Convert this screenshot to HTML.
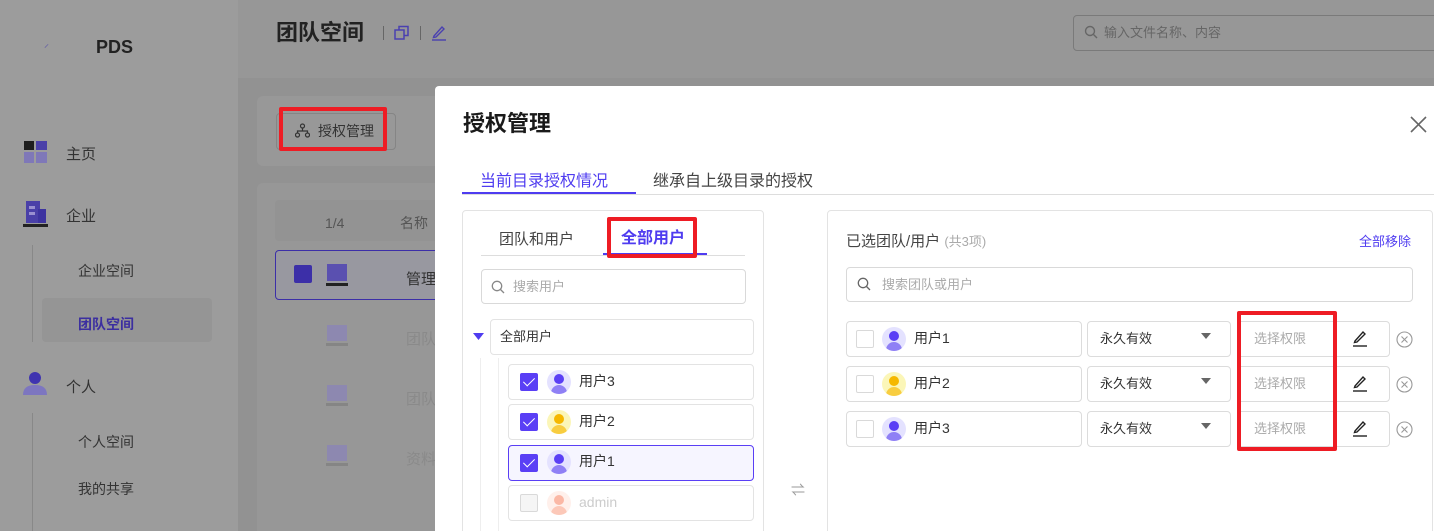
<!DOCTYPE html>
<html><head><meta charset="utf-8"><style>
*{box-sizing:border-box;margin:0;padding:0}
html,body{width:1434px;height:531px;overflow:hidden}
body{position:relative;background:#929292;font-family:"Liberation Sans","Noto Sans CJK SC",sans-serif;color:#333}
.a{position:absolute}
.t{position:absolute;white-space:nowrap;line-height:1}
.box{position:absolute;border:1px solid #e3e3e3;border-radius:4px;background:#fff}
.cb{position:absolute;width:18px;height:18px;border:1px solid #d9d9d9;border-radius:2px;background:#fff}
.cb.on{background:#5a3ff5;border-color:#5a3ff5}
.cb.on:after{content:"";position:absolute;left:5px;top:1px;width:5px;height:10px;border:solid #fff;border-width:0 1.5px 1.5px 0;transform:rotate(45deg)}
.av{position:absolute;width:24px;height:24px;border-radius:50%;overflow:hidden}
.av i{position:absolute;left:7px;top:4px;width:10px;height:10px;border-radius:50%}
.av b{position:absolute;left:4px;top:15px;width:16px;height:10px;border-radius:8px 8px 0 0}
.red{position:absolute;border:4px solid #ee1c24;border-radius:2px}
</style></head><body>
<div class="a" style="left:0;top:0;width:238px;height:531px;background:#9c9c9c"></div>
<div class="a" style="left:238px;top:0;width:1196px;height:78px;background:#979797"></div>
<div class="t" style="left:44px;top:40px;font-size:10px;color:#4b44a8">⸝</div>
<div class="t" style="left:96px;top:38px;font-size:18px;font-weight:bold;color:#222">PDS</div>
<svg class="a" style="left:24px;top:141px" width="23" height="22"><rect x="0" y="0" width="10" height="9" fill="#1e1e1e"/><rect x="12" y="0" width="11" height="9" fill="#4a40a8"/><rect x="0" y="11" width="10" height="11" fill="#7f78b8"/><rect x="12" y="11" width="11" height="11" fill="#7f78b8"/></svg>
<div class="t" style="left:66px;top:147px;font-size:15px;color:#333">主页</div>
<svg class="a" style="left:23px;top:201px" width="26" height="26"><rect x="3" y="0" width="14" height="22" fill="#4a40a8"/><rect x="15" y="8" width="8" height="14" fill="#3d33a0"/><rect x="6" y="5" width="6" height="3" fill="#9990d0"/><rect x="6" y="11" width="6" height="3" fill="#9990d0"/><rect x="0" y="23" width="25" height="3" fill="#222"/></svg>
<div class="t" style="left:66px;top:209px;font-size:15px;color:#333">企业</div>
<div class="a" style="left:32px;top:245px;width:1px;height:97px;background:#888"></div>
<div class="t" style="left:78px;top:264px;font-size:14px;color:#333">企业空间</div>
<div class="a" style="left:42px;top:298px;width:170px;height:44px;background:#959595;border-radius:4px"></div>
<div class="t" style="left:78px;top:317px;font-size:14px;color:#3c2fa0;font-weight:bold">团队空间</div>
<svg class="a" style="left:23px;top:371px" width="25" height="24"><circle cx="12" cy="7" r="6" fill="#3f34b0"/><path d="M0 24 Q0 14 12 14 Q24 14 24 24Z" fill="#7d76c0"/></svg>
<div class="t" style="left:66px;top:380px;font-size:15px;color:#333">个人</div>
<div class="a" style="left:32px;top:413px;width:1px;height:118px;background:#888"></div>
<div class="t" style="left:78px;top:435px;font-size:14px;color:#333">个人空间</div>
<div class="t" style="left:78px;top:482px;font-size:14px;color:#333">我的共享</div>

<div class="t" style="left:276px;top:22px;font-size:22px;font-weight:bold;color:#222">团队空间</div>
<div class="a" style="left:383px;top:26px;width:1px;height:14px;background:#666"></div>
<svg class="a" style="left:394px;top:25px" width="16" height="16" fill="none" stroke="#4a40b0" stroke-width="1.5"><rect x="1" y="5" width="9" height="9"/><path d="M5 5V1.5h9v9h-4"/></svg>
<div class="a" style="left:420px;top:26px;width:1px;height:14px;background:#666"></div>
<svg class="a" style="left:431px;top:24px" width="16" height="17" fill="none" stroke="#4a40b0" stroke-width="1.4"><path d="M3 12 L11 3 L13 5 L5 13 L2.5 13.5Z"/><path d="M1 16H15"/></svg>
<div class="a" style="left:1073px;top:15px;width:365px;height:36px;border:1px solid #7a7a7a;border-radius:4px"></div>
<svg class="a" style="left:1084px;top:25px" width="14" height="14" fill="none" stroke="#666" stroke-width="1.4"><circle cx="6" cy="6" r="4.5"/><path d="M9.5 9.5L13 13"/></svg>
<div class="t" style="left:1104px;top:26px;font-size:13px;color:#666">输入文件名称、内容</div>

<div class="a" style="left:257px;top:96px;width:200px;height:70px;background:#989898;border-radius:6px"></div>
<div class="a" style="left:276px;top:113px;width:120px;height:37px;border:1px solid #858585;border-radius:4px"></div>
<svg class="a" style="left:295px;top:123px" width="15" height="15" fill="none" stroke="#333" stroke-width="1.2"><circle cx="7.5" cy="3" r="2"/><circle cx="2.5" cy="12" r="2"/><circle cx="12.5" cy="12" r="2"/><path d="M7.5 5v3M2.5 10V8h10v2"/></svg>
<div class="t" style="left:318px;top:124px;font-size:14px;color:#333">授权管理</div>
<div class="red" style="left:279px;top:107px;width:108px;height:44px"></div>

<div class="a" style="left:257px;top:183px;width:200px;height:348px;background:#979797;border-radius:6px 6px 0 0"></div>
<div class="a" style="left:275px;top:200px;width:170px;height:41px;background:#939393;border-radius:4px"></div>
<div class="t" style="left:325px;top:216px;font-size:14px;color:#555">1/4</div>
<div class="t" style="left:400px;top:216px;font-size:14px;color:#555">名称</div>
<div class="a" style="left:275px;top:250px;width:170px;height:50px;border:1.5px solid #3c2fa8;border-radius:4px;background:#9898a0"></div>
<div class="a" style="left:294px;top:265px;width:18px;height:18px;background:#3c2fa8;border-radius:2px"></div>
<div class="t" style="left:406px;top:272px;font-size:15px;color:#333">管理</div>
<svg class="a" style="left:326px;top:264px" width="22" height="24"><rect x="1" y="0" width="20" height="17" fill="#5a50b0"/><rect x="0" y="19" width="22" height="3" fill="#222"/></svg>
<div class="t" style="left:406px;top:332px;font-size:15px;color:#8a8a8a">团队</div>
<div class="t" style="left:406px;top:392px;font-size:15px;color:#8a8a8a">团队</div>
<div class="t" style="left:406px;top:452px;font-size:15px;color:#8a8a8a">资料</div>
<svg class="a" style="left:326px;top:325px" width="22" height="24"><rect x="1" y="0" width="20" height="16" fill="#8d88b0"/><rect x="0" y="18" width="22" height="3" fill="#858585"/></svg>
<svg class="a" style="left:326px;top:385px" width="22" height="24"><rect x="1" y="0" width="20" height="16" fill="#8d88b0"/><rect x="0" y="18" width="22" height="3" fill="#858585"/></svg>
<svg class="a" style="left:326px;top:445px" width="22" height="24"><rect x="1" y="0" width="20" height="16" fill="#8d88b0"/><rect x="0" y="18" width="22" height="3" fill="#858585"/></svg>

<div class="a" style="left:435px;top:86px;width:999px;height:445px;background:#fff;border-radius:4px 0 0 0"></div>
<div class="t" style="left:463px;top:113px;font-size:22px;font-weight:bold;color:#1a1a1a">授权管理</div>
<svg class="a" style="left:1410px;top:116px" width="17" height="17" stroke="#666" stroke-width="1.6"><path d="M1 1L16 16M16 1L1 16"/></svg>
<div class="t" style="left:480px;top:174px;font-size:16px;color:#4f3cf0">当前目录授权情况</div>
<div class="t" style="left:653px;top:174px;font-size:16px;color:#444">继承自上级目录的授权</div>
<div class="a" style="left:462px;top:194px;width:972px;height:1px;background:#ddd"></div>
<div class="a" style="left:462px;top:192px;width:174px;height:2px;background:#4f3cf0"></div>

<div class="box" style="left:462px;top:210px;width:302px;height:330px"></div>
<div class="t" style="left:499px;top:232px;font-size:15px;color:#444">团队和用户</div>
<div class="t" style="left:621px;top:231px;font-size:16px;color:#4f3cf0;font-weight:bold">全部用户</div>
<div class="a" style="left:481px;top:255px;width:264px;height:1px;background:#ddd"></div>
<div class="a" style="left:603px;top:253px;width:104px;height:2px;background:#4f3cf0"></div>
<div class="red" style="left:607px;top:217px;width:90px;height:41px"></div>
<div class="box" style="left:481px;top:269px;width:265px;height:35px;border-color:#d9d9d9"></div>
<svg class="a" style="left:491px;top:280px" width="14" height="14" fill="none" stroke="#888" stroke-width="1.3"><circle cx="6" cy="6" r="4.7"/><path d="M9.5 9.5L13 13"/></svg>
<div class="t" style="left:513px;top:280px;font-size:13px;color:#aaa">搜索用户</div>
<svg class="a" style="left:473px;top:333px" width="11" height="7"><path d="M0 0H11L5.5 7Z" fill="#4f3cf0"/></svg>
<div class="box" style="left:490px;top:319px;width:264px;height:36px"></div>
<div class="t" style="left:500px;top:330px;font-size:13px;color:#333">全部用户</div>
<div class="a" style="left:480px;top:358px;width:1px;height:173px;background:#eee"></div>
<div class="a" style="left:498px;top:358px;width:1px;height:173px;background:#eee"></div>

<div class="box" style="left:508px;top:364px;width:246px;height:36px"></div>
<div class="cb on" style="left:520px;top:373px"></div>
<div class="av" style="left:547px;top:370px;background:#e4e2ff"><i style="background:#5a3ff5"></i><b style="background:#8f80f5"></b></div>
<div class="t" style="left:579px;top:374px;font-size:14px;color:#333">用户3</div>
<div class="box" style="left:508px;top:404px;width:246px;height:36px"></div>
<div class="cb on" style="left:520px;top:413px"></div>
<div class="av" style="left:547px;top:410px;background:#fbf6b8"><i style="background:#f5b800"></i><b style="background:#f8cd40"></b></div>
<div class="t" style="left:579px;top:414px;font-size:14px;color:#333">用户2</div>
<div class="box" style="left:508px;top:445px;width:246px;height:36px;background:#f6f5ff;border-color:#5a3ff5"></div>
<div class="cb on" style="left:520px;top:454px"></div>
<div class="av" style="left:547px;top:450px;background:#e4e2ff"><i style="background:#5a3ff5"></i><b style="background:#8f80f5"></b></div>
<div class="t" style="left:579px;top:454px;font-size:14px;color:#333">用户1</div>
<div class="box" style="left:508px;top:485px;width:246px;height:36px"></div>
<div class="cb" style="left:520px;top:494px;background:#f5f5f5"></div>
<div class="av" style="left:547px;top:491px;background:#fff0eb"><i style="background:#fbb8a5"></i><b style="background:#fcc8b8"></b></div>
<div class="t" style="left:579px;top:495px;font-size:14px;color:#ccc">admin</div>

<div class="t" style="left:791px;top:483px;font-size:14px;color:#999">⇌</div>

<div class="box" style="left:827px;top:210px;width:606px;height:330px"></div>
<div class="t" style="left:846px;top:234px;font-size:15px;color:#444">已选团队/用户 <span style="font-size:13px;color:#aaa">(共3项)</span></div>
<div class="t" style="left:1359px;top:235px;font-size:13px;color:#4f3cf0">全部移除</div>
<div class="box" style="left:846px;top:267px;width:567px;height:35px;border-color:#d9d9d9"></div>
<svg class="a" style="left:857px;top:277px" width="14" height="14" fill="none" stroke="#666" stroke-width="1.3"><circle cx="6" cy="6" r="4.7"/><path d="M9.5 9.5L13 13"/></svg>
<div class="t" style="left:882px;top:278px;font-size:13px;color:#aaa">搜索团队或用户</div>

<div class="box" style="left:846px;top:321px;width:236px;height:36px;border-color:#dcdcdc"></div>
<div class="cb" style="left:856px;top:330px"></div>
<div class="av" style="left:882px;top:327px;background:#e4e2ff"><i style="background:#5a3ff5"></i><b style="background:#8f80f5"></b></div>
<div class="t" style="left:914px;top:331px;font-size:14px;color:#333">用户1</div>
<div class="box" style="left:1087px;top:321px;width:144px;height:36px;border-color:#dcdcdc"></div>
<div class="t" style="left:1100px;top:332px;font-size:13px;color:#333">永久有效</div>
<svg class="a" style="left:1201px;top:333px" width="10" height="6"><path d="M0 0H10L5 6Z" fill="#666"/></svg>
<div class="box" style="left:1237px;top:321px;width:153px;height:36px;border-color:#dcdcdc"></div>
<div class="t" style="left:1254px;top:332px;font-size:13px;color:#aaa">选择权限</div>
<svg class="a" style="left:1352px;top:329px" width="16" height="18" fill="none" stroke="#222" stroke-width="1.4"><path d="M3 12 L11 3 L13 5 L5 13 L2.5 13.5Z"/><path d="M1 17H15"/></svg>
<svg class="a" style="left:1396px;top:331px" width="17" height="17" fill="none" stroke="#999" stroke-width="1.1"><circle cx="8.5" cy="8.5" r="7.5"/><path d="M5.5 5.5l6 6M11.5 5.5l-6 6"/></svg>

<div class="box" style="left:846px;top:366px;width:236px;height:36px;border-color:#dcdcdc"></div>
<div class="cb" style="left:856px;top:375px"></div>
<div class="av" style="left:882px;top:372px;background:#fbf6b8"><i style="background:#f5b800"></i><b style="background:#f8cd40"></b></div>
<div class="t" style="left:914px;top:376px;font-size:14px;color:#333">用户2</div>
<div class="box" style="left:1087px;top:366px;width:144px;height:36px;border-color:#dcdcdc"></div>
<div class="t" style="left:1100px;top:377px;font-size:13px;color:#333">永久有效</div>
<svg class="a" style="left:1201px;top:378px" width="10" height="6"><path d="M0 0H10L5 6Z" fill="#666"/></svg>
<div class="box" style="left:1237px;top:366px;width:153px;height:36px;border-color:#dcdcdc"></div>
<div class="t" style="left:1254px;top:377px;font-size:13px;color:#aaa">选择权限</div>
<svg class="a" style="left:1352px;top:374px" width="16" height="18" fill="none" stroke="#222" stroke-width="1.4"><path d="M3 12 L11 3 L13 5 L5 13 L2.5 13.5Z"/><path d="M1 17H15"/></svg>
<svg class="a" style="left:1396px;top:376px" width="17" height="17" fill="none" stroke="#999" stroke-width="1.1"><circle cx="8.5" cy="8.5" r="7.5"/><path d="M5.5 5.5l6 6M11.5 5.5l-6 6"/></svg>

<div class="box" style="left:846px;top:411px;width:236px;height:36px;border-color:#dcdcdc"></div>
<div class="cb" style="left:856px;top:420px"></div>
<div class="av" style="left:882px;top:417px;background:#e4e2ff"><i style="background:#5a3ff5"></i><b style="background:#8f80f5"></b></div>
<div class="t" style="left:914px;top:421px;font-size:14px;color:#333">用户3</div>
<div class="box" style="left:1087px;top:411px;width:144px;height:36px;border-color:#dcdcdc"></div>
<div class="t" style="left:1100px;top:422px;font-size:13px;color:#333">永久有效</div>
<svg class="a" style="left:1201px;top:423px" width="10" height="6"><path d="M0 0H10L5 6Z" fill="#666"/></svg>
<div class="box" style="left:1237px;top:411px;width:153px;height:36px;border-color:#dcdcdc"></div>
<div class="t" style="left:1254px;top:422px;font-size:13px;color:#aaa">选择权限</div>
<svg class="a" style="left:1352px;top:419px" width="16" height="18" fill="none" stroke="#222" stroke-width="1.4"><path d="M3 12 L11 3 L13 5 L5 13 L2.5 13.5Z"/><path d="M1 17H15"/></svg>
<svg class="a" style="left:1396px;top:421px" width="17" height="17" fill="none" stroke="#999" stroke-width="1.1"><circle cx="8.5" cy="8.5" r="7.5"/><path d="M5.5 5.5l6 6M11.5 5.5l-6 6"/></svg>

<div class="red" style="left:1237px;top:311px;width:100px;height:140px"></div>
</body></html>
